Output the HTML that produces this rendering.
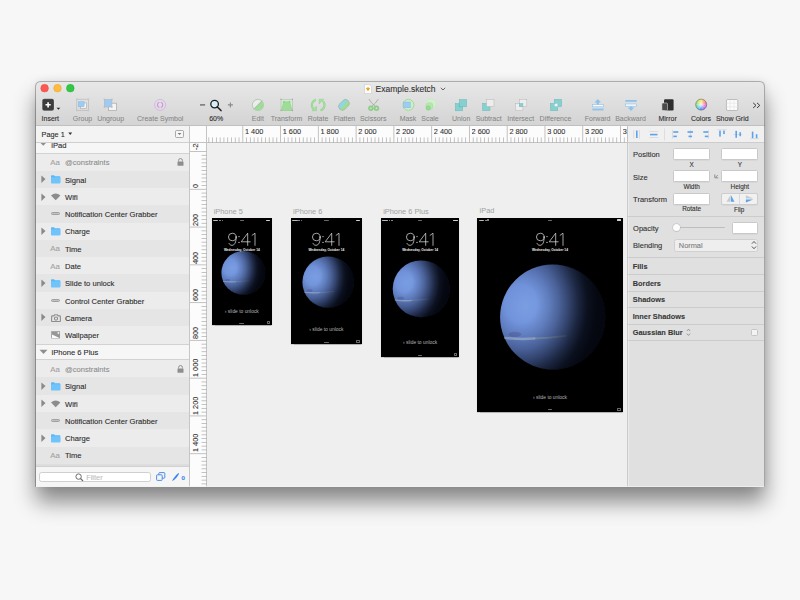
<!DOCTYPE html><html><head><meta charset="utf-8"><style>
html,body{margin:0;padding:0;}
body{width:800px;height:600px;overflow:hidden;background:#f7f7f7;position:relative;font-family:"Liberation Sans", sans-serif;}
.r{position:absolute;}
.t{position:absolute;white-space:nowrap;line-height:normal;-webkit-text-stroke:0.1px currentColor;}
</style></head><body>
<div class="r" style="left:35.50px;top:81.00px;width:729.00px;height:405.80px;border-radius:5px 5px 0 0;box-shadow:0 15px 21px rgba(0,0,0,0.45),0 0 8px rgba(0,0,0,0.08);background:#ddd;"></div>
<div class="r" style="left:35.50px;top:81.00px;width:729.00px;height:44.50px;border-radius:5px 5px 0 0;background:linear-gradient(#e8e8e8,#d4d4d4);border-bottom:0.5px solid #c0c0c0;box-sizing:border-box;"></div>
<svg class="r" style="left:0;top:0" width="100" height="100"><circle cx="44.6" cy="88.2" r="3.85" fill="#fc5753" stroke="#e0443e" stroke-width="0.4"/><circle cx="57.5" cy="88.2" r="3.85" fill="#fdbc40" stroke="#dea236" stroke-width="0.4"/><circle cx="70.3" cy="88.2" r="3.85" fill="#33c748" stroke="#1aab29" stroke-width="0.4"/></svg>
<svg class="r" style="left:363.50px;top:83.50px" width="8" height="10" viewBox="0 0 8 10"><path d="M0.5 0.5 H5.5 L7.5 2.5 V9.5 H0.5 Z" fill="#fff" stroke="#c8c8c8" stroke-width="0.6"/><path d="M2 4.3 L4 3.3 L6 4.3 L4 7.2 Z" fill="#f59c1a"/></svg>
<div class="t" style="left:375.60px;top:83.78px;font-size:8.5px;color:#333;font-weight:normal;">Example.sketch</div>
<svg class="r" style="left:439.50px;top:86.50px" width="6" height="4" viewBox="0 0 6 4"><path d="M0.8 0.8 L3 3 L5.2 0.8" fill="none" stroke="#555" stroke-width="0.9"/></svg>
<div class="t" style="left:-99.70px;width:300px;text-align:center;top:114.76px;font-size:7px;color:#2e2e2e;font-weight:normal;">Insert</div>
<div class="t" style="left:-67.50px;width:300px;text-align:center;top:114.76px;font-size:7px;color:#838383;font-weight:normal;-webkit-text-stroke:0.03px currentColor;">Group</div>
<div class="t" style="left:-39.40px;width:300px;text-align:center;top:114.76px;font-size:7px;color:#838383;font-weight:normal;-webkit-text-stroke:0.03px currentColor;">Ungroup</div>
<div class="t" style="left:10.20px;width:300px;text-align:center;top:114.76px;font-size:7px;color:#838383;font-weight:normal;-webkit-text-stroke:0.03px currentColor;">Create Symbol</div>
<div class="t" style="left:66.20px;width:300px;text-align:center;top:114.76px;font-size:7px;color:#2e2e2e;font-weight:normal;">60%</div>
<div class="t" style="left:107.80px;width:300px;text-align:center;top:114.76px;font-size:7px;color:#838383;font-weight:normal;-webkit-text-stroke:0.03px currentColor;">Edit</div>
<div class="t" style="left:136.50px;width:300px;text-align:center;top:114.76px;font-size:7px;color:#838383;font-weight:normal;-webkit-text-stroke:0.03px currentColor;">Transform</div>
<div class="t" style="left:168.00px;width:300px;text-align:center;top:114.76px;font-size:7px;color:#838383;font-weight:normal;-webkit-text-stroke:0.03px currentColor;">Rotate</div>
<div class="t" style="left:194.50px;width:300px;text-align:center;top:114.76px;font-size:7px;color:#838383;font-weight:normal;-webkit-text-stroke:0.03px currentColor;">Flatten</div>
<div class="t" style="left:223.20px;width:300px;text-align:center;top:114.76px;font-size:7px;color:#838383;font-weight:normal;-webkit-text-stroke:0.03px currentColor;">Scissors</div>
<div class="t" style="left:258.00px;width:300px;text-align:center;top:114.76px;font-size:7px;color:#838383;font-weight:normal;-webkit-text-stroke:0.03px currentColor;">Mask</div>
<div class="t" style="left:280.00px;width:300px;text-align:center;top:114.76px;font-size:7px;color:#838383;font-weight:normal;-webkit-text-stroke:0.03px currentColor;">Scale</div>
<div class="t" style="left:311.20px;width:300px;text-align:center;top:114.76px;font-size:7px;color:#838383;font-weight:normal;-webkit-text-stroke:0.03px currentColor;">Union</div>
<div class="t" style="left:338.70px;width:300px;text-align:center;top:114.76px;font-size:7px;color:#838383;font-weight:normal;-webkit-text-stroke:0.03px currentColor;">Subtract</div>
<div class="t" style="left:370.70px;width:300px;text-align:center;top:114.76px;font-size:7px;color:#838383;font-weight:normal;-webkit-text-stroke:0.03px currentColor;">Intersect</div>
<div class="t" style="left:405.50px;width:300px;text-align:center;top:114.76px;font-size:7px;color:#838383;font-weight:normal;-webkit-text-stroke:0.03px currentColor;">Difference</div>
<div class="t" style="left:447.70px;width:300px;text-align:center;top:114.76px;font-size:7px;color:#838383;font-weight:normal;-webkit-text-stroke:0.03px currentColor;">Forward</div>
<div class="t" style="left:480.50px;width:300px;text-align:center;top:114.76px;font-size:7px;color:#838383;font-weight:normal;-webkit-text-stroke:0.03px currentColor;">Backward</div>
<div class="t" style="left:517.60px;width:300px;text-align:center;top:114.76px;font-size:7px;color:#2e2e2e;font-weight:normal;">Mirror</div>
<div class="t" style="left:551.00px;width:300px;text-align:center;top:114.76px;font-size:7px;color:#2e2e2e;font-weight:normal;">Colors</div>
<div class="t" style="left:582.30px;width:300px;text-align:center;top:114.76px;font-size:7px;color:#2e2e2e;font-weight:normal;">Show Grid</div>
<div class="r" style="left:36.00px;top:125.50px;width:153.50px;height:17.30px;background:#f3f3f3;border-bottom:0.6px solid #cfcfcf;box-sizing:border-box;"></div>
<div class="t" style="left:41.60px;top:129.98px;font-size:7.3px;color:#2b2b2b;font-weight:normal;">Page 1</div>
<svg class="r" style="left:68.30px;top:132.40px" width="5" height="4" viewBox="0 0 5 4"><path d="M0.3 0.5 H4.2 L2.25 3 Z" fill="#333"/></svg>
<svg class="r" style="left:174.50px;top:129.50px" width="9" height="8" viewBox="0 0 9 8"><rect x="0.5" y="0.5" width="8" height="7" rx="1" fill="#f7f7f7" stroke="#8a8a8a" stroke-width="0.7"/><path d="M2.6 3 H6.4 L4.5 5 Z" fill="#777"/></svg>
<div class="r" style="left:36.00px;top:142.80px;width:153.50px;height:11.30px;background:#f6f6f6;border-bottom:0.6px solid #d2d2d2;box-sizing:border-box;"></div>
<div class="r" style="left:36.0px;top:142.8px;width:60px;height:10.4px;overflow:hidden"><svg class="r" style="left:0;top:-0.8px" width="40" height="12"><path d="M3.5 0 H11.0 L7.25 3.8 Z" fill="#8f8f8f"/></svg><div class="t" style="left:15.3px;top:-2.2px;font-size:7.6px;color:#2b2b2b">iPad</div></div>
<div class="r" style="left:36.00px;top:153.50px;width:153.50px;height:17.58px;background:#ececec;"></div>
<div class="t" style="left:50.20px;top:157.86px;font-size:7.8px;color:#a3a3a3;font-weight:normal;">Aa</div>
<div class="t" style="left:65.00px;top:158.35px;font-size:7.6px;color:#8c8c8c;font-weight:normal;">@constraints</div>
<svg class="r" style="left:176.80px;top:158.14px" width="7" height="8" viewBox="0 0 7 8"><path d="M1.6 3.6 V2.6 Q1.6 0.5 3.5 0.5 Q5.4 0.5 5.4 2.6 V3.6" fill="none" stroke="#8e8e8e" stroke-width="1"/><rect x="0.5" y="3.5" width="6" height="4.3" rx="0.6" fill="#8e8e8e"/></svg>
<div class="r" style="left:36.00px;top:170.78px;width:153.50px;height:17.58px;background:#e5e5e5;"></div>
<svg class="r" style="left:41.00px;top:175.22px" width="5" height="9" viewBox="0 0 5 9"><path d="M0.4 0.4 L4.5 4.1 L0.4 7.9 Z" fill="#8a8a8a"/></svg>
<svg class="r" style="left:50.70px;top:175.12px" width="10" height="9" viewBox="0 0 10 9"><path d="M0 1 Q0 0.2 0.8 0.2 H3.0 L3.9 1.2 H8.6 Q9.3 1.2 9.3 1.9 V7.6 Q9.3 8.2 8.7 8.2 H0.6 Q0 8.2 0 7.6 Z" fill="#5ab8f5"/><rect x="0" y="2.3" width="9.3" height="5.9" rx="0.6" fill="#6ec4fb"/></svg>
<div class="t" style="left:65.00px;top:175.63px;font-size:7.6px;color:#2b2b2b;font-weight:normal;">Signal</div>
<div class="r" style="left:36.00px;top:188.06px;width:153.50px;height:17.58px;background:#ececec;"></div>
<svg class="r" style="left:41.00px;top:192.50px" width="5" height="9" viewBox="0 0 5 9"><path d="M0.4 0.4 L4.5 4.1 L0.4 7.9 Z" fill="#8a8a8a"/></svg>
<svg class="r" style="left:50.60px;top:193.10px" width="10" height="8" viewBox="0 0 10 8"><path d="M0 2.4 Q4.7 -1.6 9.4 2.4 L4.7 7.2 Z" fill="#8c8c8c"/></svg>
<div class="t" style="left:65.00px;top:192.91px;font-size:7.6px;color:#2b2b2b;font-weight:normal;">Wifi</div>
<div class="r" style="left:36.00px;top:205.34px;width:153.50px;height:17.58px;background:#e5e5e5;"></div>
<div class="r" style="left:50.80px;top:212.48px;width:9.20px;height:3.00px;border-radius:1.5px;background:#c2c2c2;border:0.6px solid #a0a0a0;box-sizing:border-box;"></div>
<div class="t" style="left:65.00px;top:210.19px;font-size:7.6px;color:#2b2b2b;font-weight:normal;">Notification Center Grabber</div>
<div class="r" style="left:36.00px;top:222.62px;width:153.50px;height:17.58px;background:#ececec;"></div>
<svg class="r" style="left:41.00px;top:227.06px" width="5" height="9" viewBox="0 0 5 9"><path d="M0.4 0.4 L4.5 4.1 L0.4 7.9 Z" fill="#8a8a8a"/></svg>
<svg class="r" style="left:50.70px;top:226.96px" width="10" height="9" viewBox="0 0 10 9"><path d="M0 1 Q0 0.2 0.8 0.2 H3.0 L3.9 1.2 H8.6 Q9.3 1.2 9.3 1.9 V7.6 Q9.3 8.2 8.7 8.2 H0.6 Q0 8.2 0 7.6 Z" fill="#5ab8f5"/><rect x="0" y="2.3" width="9.3" height="5.9" rx="0.6" fill="#6ec4fb"/></svg>
<div class="t" style="left:65.00px;top:227.47px;font-size:7.6px;color:#2b2b2b;font-weight:normal;">Charge</div>
<div class="r" style="left:36.00px;top:239.90px;width:153.50px;height:17.58px;background:#e5e5e5;"></div>
<div class="t" style="left:50.20px;top:244.26px;font-size:7.8px;color:#a3a3a3;font-weight:normal;">Aa</div>
<div class="t" style="left:65.00px;top:244.75px;font-size:7.6px;color:#2b2b2b;font-weight:normal;">Time</div>
<div class="r" style="left:36.00px;top:257.18px;width:153.50px;height:17.58px;background:#ececec;"></div>
<div class="t" style="left:50.20px;top:261.54px;font-size:7.8px;color:#a3a3a3;font-weight:normal;">Aa</div>
<div class="t" style="left:65.00px;top:262.03px;font-size:7.6px;color:#2b2b2b;font-weight:normal;">Date</div>
<div class="r" style="left:36.00px;top:274.46px;width:153.50px;height:17.58px;background:#e5e5e5;"></div>
<svg class="r" style="left:41.00px;top:278.90px" width="5" height="9" viewBox="0 0 5 9"><path d="M0.4 0.4 L4.5 4.1 L0.4 7.9 Z" fill="#8a8a8a"/></svg>
<svg class="r" style="left:50.70px;top:278.80px" width="10" height="9" viewBox="0 0 10 9"><path d="M0 1 Q0 0.2 0.8 0.2 H3.0 L3.9 1.2 H8.6 Q9.3 1.2 9.3 1.9 V7.6 Q9.3 8.2 8.7 8.2 H0.6 Q0 8.2 0 7.6 Z" fill="#5ab8f5"/><rect x="0" y="2.3" width="9.3" height="5.9" rx="0.6" fill="#6ec4fb"/></svg>
<div class="t" style="left:65.00px;top:279.31px;font-size:7.6px;color:#2b2b2b;font-weight:normal;">Slide to unlock</div>
<div class="r" style="left:36.00px;top:291.74px;width:153.50px;height:17.58px;background:#ececec;"></div>
<div class="r" style="left:50.80px;top:298.88px;width:9.20px;height:3.00px;border-radius:1.5px;background:#c2c2c2;border:0.6px solid #a0a0a0;box-sizing:border-box;"></div>
<div class="t" style="left:65.00px;top:296.59px;font-size:7.6px;color:#2b2b2b;font-weight:normal;">Control Center Grabber</div>
<div class="r" style="left:36.00px;top:309.02px;width:153.50px;height:17.58px;background:#e5e5e5;"></div>
<svg class="r" style="left:41.00px;top:313.46px" width="5" height="9" viewBox="0 0 5 9"><path d="M0.4 0.4 L4.5 4.1 L0.4 7.9 Z" fill="#8a8a8a"/></svg>
<svg class="r" style="left:50.50px;top:313.66px" width="10" height="8" viewBox="0 0 10 8"><path d="M1.2 1.9 H2.9 L3.7 0.7 H6.3 L7.1 1.9 H8.8 Q9.4 1.9 9.4 2.5 V6.9 Q9.4 7.5 8.8 7.5 H1.2 Q0.6 7.5 0.6 6.9 V2.5 Q0.6 1.9 1.2 1.9 Z" fill="none" stroke="#8e8e8e" stroke-width="1.1"/><circle cx="5" cy="4.6" r="1.6" fill="none" stroke="#8e8e8e" stroke-width="1.1"/></svg>
<div class="t" style="left:65.00px;top:313.87px;font-size:7.6px;color:#2b2b2b;font-weight:normal;">Camera</div>
<div class="r" style="left:36.00px;top:326.30px;width:153.50px;height:17.58px;background:#ececec;"></div>
<svg class="r" style="left:50.80px;top:331.24px" width="9.4" height="7.6" viewBox="0 0 9.4 7.6"><rect x="0.2" y="0.2" width="8.9" height="7.2" fill="#979797"/><path d="M1.0 3.6 L8.4 6.9 H1.0 Z" fill="#fdfdfd"/><rect x="6.6" y="1.2" width="1.6" height="1.6" fill="#fdfdfd"/></svg>
<div class="t" style="left:65.00px;top:331.15px;font-size:7.6px;color:#2b2b2b;font-weight:normal;">Wallpaper</div>
<div class="r" style="left:36.00px;top:343.58px;width:153.50px;height:16.60px;background:#f6f6f6;border-top:0.6px solid #d2d2d2;border-bottom:0.6px solid #d2d2d2;box-sizing:border-box;"></div>
<svg class="r" style="left:38.80px;top:348.88px" width="9" height="6" viewBox="0 0 9 6"><path d="M0.5 0.8 H8.5 L4.5 5 Z" fill="#8f8f8f"/></svg>
<div class="t" style="left:51.50px;top:347.99px;font-size:7.6px;color:#2b2b2b;font-weight:normal;">iPhone 6 Plus</div>
<div class="r" style="left:36.00px;top:360.18px;width:153.50px;height:17.58px;background:#ececec;"></div>
<div class="t" style="left:50.20px;top:364.54px;font-size:7.8px;color:#a3a3a3;font-weight:normal;">Aa</div>
<div class="t" style="left:65.00px;top:365.03px;font-size:7.6px;color:#8c8c8c;font-weight:normal;">@constraints</div>
<svg class="r" style="left:176.80px;top:364.82px" width="7" height="8" viewBox="0 0 7 8"><path d="M1.6 3.6 V2.6 Q1.6 0.5 3.5 0.5 Q5.4 0.5 5.4 2.6 V3.6" fill="none" stroke="#8e8e8e" stroke-width="1"/><rect x="0.5" y="3.5" width="6" height="4.3" rx="0.6" fill="#8e8e8e"/></svg>
<div class="r" style="left:36.00px;top:377.46px;width:153.50px;height:17.58px;background:#e5e5e5;"></div>
<svg class="r" style="left:41.00px;top:381.90px" width="5" height="9" viewBox="0 0 5 9"><path d="M0.4 0.4 L4.5 4.1 L0.4 7.9 Z" fill="#8a8a8a"/></svg>
<svg class="r" style="left:50.70px;top:381.80px" width="10" height="9" viewBox="0 0 10 9"><path d="M0 1 Q0 0.2 0.8 0.2 H3.0 L3.9 1.2 H8.6 Q9.3 1.2 9.3 1.9 V7.6 Q9.3 8.2 8.7 8.2 H0.6 Q0 8.2 0 7.6 Z" fill="#5ab8f5"/><rect x="0" y="2.3" width="9.3" height="5.9" rx="0.6" fill="#6ec4fb"/></svg>
<div class="t" style="left:65.00px;top:382.31px;font-size:7.6px;color:#2b2b2b;font-weight:normal;">Signal</div>
<div class="r" style="left:36.00px;top:394.74px;width:153.50px;height:17.58px;background:#ececec;"></div>
<svg class="r" style="left:41.00px;top:399.18px" width="5" height="9" viewBox="0 0 5 9"><path d="M0.4 0.4 L4.5 4.1 L0.4 7.9 Z" fill="#8a8a8a"/></svg>
<svg class="r" style="left:50.60px;top:399.78px" width="10" height="8" viewBox="0 0 10 8"><path d="M0 2.4 Q4.7 -1.6 9.4 2.4 L4.7 7.2 Z" fill="#8c8c8c"/></svg>
<div class="t" style="left:65.00px;top:399.59px;font-size:7.6px;color:#2b2b2b;font-weight:normal;">Wifi</div>
<div class="r" style="left:36.00px;top:412.02px;width:153.50px;height:17.58px;background:#e5e5e5;"></div>
<div class="r" style="left:50.80px;top:419.16px;width:9.20px;height:3.00px;border-radius:1.5px;background:#c2c2c2;border:0.6px solid #a0a0a0;box-sizing:border-box;"></div>
<div class="t" style="left:65.00px;top:416.87px;font-size:7.6px;color:#2b2b2b;font-weight:normal;">Notification Center Grabber</div>
<div class="r" style="left:36.00px;top:429.30px;width:153.50px;height:17.58px;background:#ececec;"></div>
<svg class="r" style="left:41.00px;top:433.74px" width="5" height="9" viewBox="0 0 5 9"><path d="M0.4 0.4 L4.5 4.1 L0.4 7.9 Z" fill="#8a8a8a"/></svg>
<svg class="r" style="left:50.70px;top:433.64px" width="10" height="9" viewBox="0 0 10 9"><path d="M0 1 Q0 0.2 0.8 0.2 H3.0 L3.9 1.2 H8.6 Q9.3 1.2 9.3 1.9 V7.6 Q9.3 8.2 8.7 8.2 H0.6 Q0 8.2 0 7.6 Z" fill="#5ab8f5"/><rect x="0" y="2.3" width="9.3" height="5.9" rx="0.6" fill="#6ec4fb"/></svg>
<div class="t" style="left:65.00px;top:434.15px;font-size:7.6px;color:#2b2b2b;font-weight:normal;">Charge</div>
<div class="r" style="left:36.00px;top:446.58px;width:153.50px;height:17.58px;background:#e5e5e5;"></div>
<div class="t" style="left:50.20px;top:450.94px;font-size:7.8px;color:#a3a3a3;font-weight:normal;">Aa</div>
<div class="t" style="left:65.00px;top:451.43px;font-size:7.6px;color:#2b2b2b;font-weight:normal;">Time</div>
<div class="r" style="left:36.00px;top:465.60px;width:153.50px;height:21.20px;background:#f5f5f5;border-top:0.6px solid #d0d0d0;box-sizing:border-box;"></div>
<div class="r" style="left:39.00px;top:471.60px;width:111.60px;height:10.80px;background:#fff;border:0.6px solid #cfcfcf;border-radius:2.5px;box-sizing:border-box;"></div>
<svg class="r" style="left:75.20px;top:472.80px" width="9" height="9" viewBox="0 0 9 9"><circle cx="3.6" cy="3.6" r="2.7" fill="none" stroke="#6a6a6a" stroke-width="1"/><path d="M5.5 5.5 L8.0 8.0" stroke="#6a6a6a" stroke-width="1.1"/></svg>
<div class="t" style="left:86.20px;top:472.99px;font-size:7.4px;color:#bdbdbd;font-weight:normal;">Filter</div>
<svg class="r" style="left:156.00px;top:472.00px" width="10" height="9" viewBox="0 0 10 9"><rect x="0.6" y="2.8" width="5.6" height="5.6" rx="0.8" fill="none" stroke="#3c82e6" stroke-width="0.9"/><path d="M2.8 2.8 V1.4 Q2.8 0.6 3.6 0.6 H8 Q8.8 0.6 8.8 1.4 V5.4 Q8.8 6.2 8 6.2 H6.2" fill="none" stroke="#3c82e6" stroke-width="0.9"/></svg>
<svg class="r" style="left:171.00px;top:471.50px" width="9" height="10" viewBox="0 0 9 10"><path d="M7.6 1.0 Q8.2 1.2 7.9 2.0 Q6.2 5.6 3.4 7.8 Q2.0 8.9 1.0 9.0 Q1.6 7.4 3.4 5.2 Q5.4 2.6 7.6 1.0 Z" fill="#3a86ee"/></svg>
<div class="t" style="left:181.40px;top:473.90px;font-size:6.2px;color:#3a86ee;font-weight:bold;">0</div>
<div class="r" style="left:189.20px;top:125.50px;width:0.70px;height:361.30px;background:#c6c6c6;"></div>
<div class="r" style="left:189.90px;top:125.50px;width:437.30px;height:361.30px;background:#efefef;"></div>
<div class="r" style="left:189.90px;top:125.50px;width:437.30px;height:17.40px;background:#fcfcfc;border-bottom:0.6px solid #c4c4c4;box-sizing:border-box;"></div>
<div class="r" style="left:189.90px;top:142.90px;width:17.10px;height:343.90px;background:#fcfcfc;border-right:0.6px solid #c4c4c4;box-sizing:border-box;"></div>
<div class="r" style="left:206.40px;top:125.50px;width:0.60px;height:17.40px;background:#c4c4c4;"></div>
<svg class="r" style="left:0;top:125.5px;overflow:hidden" width="627" height="17.40"><clipPath id="hc"><rect x="207.0" y="0" width="420.20000000000005" height="20"/></clipPath><g clip-path="url(#hc)"><rect x="208.41" y="11.40" width="0.8" height="6.00" fill="#b4b4b4"/><rect x="212.18" y="11.40" width="0.8" height="6.00" fill="#b4b4b4"/><rect x="215.96" y="11.40" width="0.8" height="6.00" fill="#b4b4b4"/><rect x="219.74" y="11.40" width="0.8" height="6.00" fill="#b4b4b4"/><rect x="223.52" y="11.40" width="0.8" height="6.00" fill="#b4b4b4"/><rect x="227.29" y="11.40" width="0.8" height="6.00" fill="#b4b4b4"/><rect x="231.07" y="11.40" width="0.8" height="6.00" fill="#b4b4b4"/><rect x="234.85" y="11.40" width="0.8" height="6.00" fill="#b4b4b4"/><rect x="238.62" y="11.40" width="0.8" height="6.00" fill="#b4b4b4"/><rect x="242.35" y="0" width="0.9" height="17.40" fill="#bcbcbc"/><rect x="246.18" y="11.40" width="0.8" height="6.00" fill="#b4b4b4"/><rect x="249.95" y="11.40" width="0.8" height="6.00" fill="#b4b4b4"/><rect x="253.73" y="11.40" width="0.8" height="6.00" fill="#b4b4b4"/><rect x="257.51" y="11.40" width="0.8" height="6.00" fill="#b4b4b4"/><rect x="261.29" y="11.40" width="0.8" height="6.00" fill="#b4b4b4"/><rect x="265.06" y="11.40" width="0.8" height="6.00" fill="#b4b4b4"/><rect x="268.84" y="11.40" width="0.8" height="6.00" fill="#b4b4b4"/><rect x="272.62" y="11.40" width="0.8" height="6.00" fill="#b4b4b4"/><rect x="276.39" y="11.40" width="0.8" height="6.00" fill="#b4b4b4"/><rect x="280.12" y="0" width="0.9" height="17.40" fill="#bcbcbc"/><rect x="283.95" y="11.40" width="0.8" height="6.00" fill="#b4b4b4"/><rect x="287.72" y="11.40" width="0.8" height="6.00" fill="#b4b4b4"/><rect x="291.50" y="11.40" width="0.8" height="6.00" fill="#b4b4b4"/><rect x="295.28" y="11.40" width="0.8" height="6.00" fill="#b4b4b4"/><rect x="299.06" y="11.40" width="0.8" height="6.00" fill="#b4b4b4"/><rect x="302.83" y="11.40" width="0.8" height="6.00" fill="#b4b4b4"/><rect x="306.61" y="11.40" width="0.8" height="6.00" fill="#b4b4b4"/><rect x="310.39" y="11.40" width="0.8" height="6.00" fill="#b4b4b4"/><rect x="314.16" y="11.40" width="0.8" height="6.00" fill="#b4b4b4"/><rect x="317.89" y="0" width="0.9" height="17.40" fill="#bcbcbc"/><rect x="321.72" y="11.40" width="0.8" height="6.00" fill="#b4b4b4"/><rect x="325.49" y="11.40" width="0.8" height="6.00" fill="#b4b4b4"/><rect x="329.27" y="11.40" width="0.8" height="6.00" fill="#b4b4b4"/><rect x="333.05" y="11.40" width="0.8" height="6.00" fill="#b4b4b4"/><rect x="336.83" y="11.40" width="0.8" height="6.00" fill="#b4b4b4"/><rect x="340.60" y="11.40" width="0.8" height="6.00" fill="#b4b4b4"/><rect x="344.38" y="11.40" width="0.8" height="6.00" fill="#b4b4b4"/><rect x="348.16" y="11.40" width="0.8" height="6.00" fill="#b4b4b4"/><rect x="351.93" y="11.40" width="0.8" height="6.00" fill="#b4b4b4"/><rect x="355.66" y="0" width="0.9" height="17.40" fill="#bcbcbc"/><rect x="359.49" y="11.40" width="0.8" height="6.00" fill="#b4b4b4"/><rect x="363.26" y="11.40" width="0.8" height="6.00" fill="#b4b4b4"/><rect x="367.04" y="11.40" width="0.8" height="6.00" fill="#b4b4b4"/><rect x="370.82" y="11.40" width="0.8" height="6.00" fill="#b4b4b4"/><rect x="374.60" y="11.40" width="0.8" height="6.00" fill="#b4b4b4"/><rect x="378.37" y="11.40" width="0.8" height="6.00" fill="#b4b4b4"/><rect x="382.15" y="11.40" width="0.8" height="6.00" fill="#b4b4b4"/><rect x="385.93" y="11.40" width="0.8" height="6.00" fill="#b4b4b4"/><rect x="389.70" y="11.40" width="0.8" height="6.00" fill="#b4b4b4"/><rect x="393.43" y="0" width="0.9" height="17.40" fill="#bcbcbc"/><rect x="397.26" y="11.40" width="0.8" height="6.00" fill="#b4b4b4"/><rect x="401.03" y="11.40" width="0.8" height="6.00" fill="#b4b4b4"/><rect x="404.81" y="11.40" width="0.8" height="6.00" fill="#b4b4b4"/><rect x="408.59" y="11.40" width="0.8" height="6.00" fill="#b4b4b4"/><rect x="412.37" y="11.40" width="0.8" height="6.00" fill="#b4b4b4"/><rect x="416.14" y="11.40" width="0.8" height="6.00" fill="#b4b4b4"/><rect x="419.92" y="11.40" width="0.8" height="6.00" fill="#b4b4b4"/><rect x="423.70" y="11.40" width="0.8" height="6.00" fill="#b4b4b4"/><rect x="427.47" y="11.40" width="0.8" height="6.00" fill="#b4b4b4"/><rect x="431.20" y="0" width="0.9" height="17.40" fill="#bcbcbc"/><rect x="435.03" y="11.40" width="0.8" height="6.00" fill="#b4b4b4"/><rect x="438.80" y="11.40" width="0.8" height="6.00" fill="#b4b4b4"/><rect x="442.58" y="11.40" width="0.8" height="6.00" fill="#b4b4b4"/><rect x="446.36" y="11.40" width="0.8" height="6.00" fill="#b4b4b4"/><rect x="450.14" y="11.40" width="0.8" height="6.00" fill="#b4b4b4"/><rect x="453.91" y="11.40" width="0.8" height="6.00" fill="#b4b4b4"/><rect x="457.69" y="11.40" width="0.8" height="6.00" fill="#b4b4b4"/><rect x="461.47" y="11.40" width="0.8" height="6.00" fill="#b4b4b4"/><rect x="465.24" y="11.40" width="0.8" height="6.00" fill="#b4b4b4"/><rect x="468.97" y="0" width="0.9" height="17.40" fill="#bcbcbc"/><rect x="472.80" y="11.40" width="0.8" height="6.00" fill="#b4b4b4"/><rect x="476.57" y="11.40" width="0.8" height="6.00" fill="#b4b4b4"/><rect x="480.35" y="11.40" width="0.8" height="6.00" fill="#b4b4b4"/><rect x="484.13" y="11.40" width="0.8" height="6.00" fill="#b4b4b4"/><rect x="487.91" y="11.40" width="0.8" height="6.00" fill="#b4b4b4"/><rect x="491.68" y="11.40" width="0.8" height="6.00" fill="#b4b4b4"/><rect x="495.46" y="11.40" width="0.8" height="6.00" fill="#b4b4b4"/><rect x="499.24" y="11.40" width="0.8" height="6.00" fill="#b4b4b4"/><rect x="503.01" y="11.40" width="0.8" height="6.00" fill="#b4b4b4"/><rect x="506.74" y="0" width="0.9" height="17.40" fill="#bcbcbc"/><rect x="510.57" y="11.40" width="0.8" height="6.00" fill="#b4b4b4"/><rect x="514.34" y="11.40" width="0.8" height="6.00" fill="#b4b4b4"/><rect x="518.12" y="11.40" width="0.8" height="6.00" fill="#b4b4b4"/><rect x="521.90" y="11.40" width="0.8" height="6.00" fill="#b4b4b4"/><rect x="525.68" y="11.40" width="0.8" height="6.00" fill="#b4b4b4"/><rect x="529.45" y="11.40" width="0.8" height="6.00" fill="#b4b4b4"/><rect x="533.23" y="11.40" width="0.8" height="6.00" fill="#b4b4b4"/><rect x="537.01" y="11.40" width="0.8" height="6.00" fill="#b4b4b4"/><rect x="540.78" y="11.40" width="0.8" height="6.00" fill="#b4b4b4"/><rect x="544.51" y="0" width="0.9" height="17.40" fill="#bcbcbc"/><rect x="548.34" y="11.40" width="0.8" height="6.00" fill="#b4b4b4"/><rect x="552.11" y="11.40" width="0.8" height="6.00" fill="#b4b4b4"/><rect x="555.89" y="11.40" width="0.8" height="6.00" fill="#b4b4b4"/><rect x="559.67" y="11.40" width="0.8" height="6.00" fill="#b4b4b4"/><rect x="563.45" y="11.40" width="0.8" height="6.00" fill="#b4b4b4"/><rect x="567.22" y="11.40" width="0.8" height="6.00" fill="#b4b4b4"/><rect x="571.00" y="11.40" width="0.8" height="6.00" fill="#b4b4b4"/><rect x="574.78" y="11.40" width="0.8" height="6.00" fill="#b4b4b4"/><rect x="578.55" y="11.40" width="0.8" height="6.00" fill="#b4b4b4"/><rect x="582.28" y="0" width="0.9" height="17.40" fill="#bcbcbc"/><rect x="586.11" y="11.40" width="0.8" height="6.00" fill="#b4b4b4"/><rect x="589.88" y="11.40" width="0.8" height="6.00" fill="#b4b4b4"/><rect x="593.66" y="11.40" width="0.8" height="6.00" fill="#b4b4b4"/><rect x="597.44" y="11.40" width="0.8" height="6.00" fill="#b4b4b4"/><rect x="601.22" y="11.40" width="0.8" height="6.00" fill="#b4b4b4"/><rect x="604.99" y="11.40" width="0.8" height="6.00" fill="#b4b4b4"/><rect x="608.77" y="11.40" width="0.8" height="6.00" fill="#b4b4b4"/><rect x="612.55" y="11.40" width="0.8" height="6.00" fill="#b4b4b4"/><rect x="616.32" y="11.40" width="0.8" height="6.00" fill="#b4b4b4"/><rect x="620.05" y="0" width="0.9" height="17.40" fill="#bcbcbc"/><rect x="623.88" y="11.40" width="0.8" height="6.00" fill="#b4b4b4"/></g></svg>
<div class="r" style="left:245.00px;top:126px;width:40.00px;height:12px;overflow:hidden"><div class="t" style="left:0;top:1.48px;font-size:7.3px;color:#333">1 400</div></div>
<div class="r" style="left:282.77px;top:126px;width:40.00px;height:12px;overflow:hidden"><div class="t" style="left:0;top:1.48px;font-size:7.3px;color:#333">1 600</div></div>
<div class="r" style="left:320.54px;top:126px;width:40.00px;height:12px;overflow:hidden"><div class="t" style="left:0;top:1.48px;font-size:7.3px;color:#333">1 800</div></div>
<div class="r" style="left:358.31px;top:126px;width:40.00px;height:12px;overflow:hidden"><div class="t" style="left:0;top:1.48px;font-size:7.3px;color:#333">2 000</div></div>
<div class="r" style="left:396.08px;top:126px;width:40.00px;height:12px;overflow:hidden"><div class="t" style="left:0;top:1.48px;font-size:7.3px;color:#333">2 200</div></div>
<div class="r" style="left:433.85px;top:126px;width:40.00px;height:12px;overflow:hidden"><div class="t" style="left:0;top:1.48px;font-size:7.3px;color:#333">2 400</div></div>
<div class="r" style="left:471.62px;top:126px;width:40.00px;height:12px;overflow:hidden"><div class="t" style="left:0;top:1.48px;font-size:7.3px;color:#333">2 600</div></div>
<div class="r" style="left:509.39px;top:126px;width:40.00px;height:12px;overflow:hidden"><div class="t" style="left:0;top:1.48px;font-size:7.3px;color:#333">2 800</div></div>
<div class="r" style="left:547.16px;top:126px;width:40.00px;height:12px;overflow:hidden"><div class="t" style="left:0;top:1.48px;font-size:7.3px;color:#333">3 000</div></div>
<div class="r" style="left:584.93px;top:126px;width:40.00px;height:12px;overflow:hidden"><div class="t" style="left:0;top:1.48px;font-size:7.3px;color:#333">3 200</div></div>
<div class="r" style="left:622.70px;top:126px;width:4.50px;height:12px;overflow:hidden"><div class="t" style="left:0;top:1.48px;font-size:7.3px;color:#333">3 400</div></div>
<svg class="r" style="left:189.5px;top:142.9px" width="17.50" height="343.90"><rect x="0" y="8.08" width="17.50" height="0.9" fill="#bcbcbc"/><rect x="11.50" y="11.91" width="6.00" height="0.8" fill="#b4b4b4"/><rect x="11.50" y="15.68" width="6.00" height="0.8" fill="#b4b4b4"/><rect x="11.50" y="19.46" width="6.00" height="0.8" fill="#b4b4b4"/><rect x="11.50" y="23.24" width="6.00" height="0.8" fill="#b4b4b4"/><rect x="11.50" y="27.01" width="6.00" height="0.8" fill="#b4b4b4"/><rect x="11.50" y="30.79" width="6.00" height="0.8" fill="#b4b4b4"/><rect x="11.50" y="34.57" width="6.00" height="0.8" fill="#b4b4b4"/><rect x="11.50" y="38.35" width="6.00" height="0.8" fill="#b4b4b4"/><rect x="11.50" y="42.12" width="6.00" height="0.8" fill="#b4b4b4"/><rect x="0" y="45.85" width="17.50" height="0.9" fill="#bcbcbc"/><rect x="11.50" y="49.68" width="6.00" height="0.8" fill="#b4b4b4"/><rect x="11.50" y="53.45" width="6.00" height="0.8" fill="#b4b4b4"/><rect x="11.50" y="57.23" width="6.00" height="0.8" fill="#b4b4b4"/><rect x="11.50" y="61.01" width="6.00" height="0.8" fill="#b4b4b4"/><rect x="11.50" y="64.78" width="6.00" height="0.8" fill="#b4b4b4"/><rect x="11.50" y="68.56" width="6.00" height="0.8" fill="#b4b4b4"/><rect x="11.50" y="72.34" width="6.00" height="0.8" fill="#b4b4b4"/><rect x="11.50" y="76.12" width="6.00" height="0.8" fill="#b4b4b4"/><rect x="11.50" y="79.89" width="6.00" height="0.8" fill="#b4b4b4"/><rect x="0" y="83.62" width="17.50" height="0.9" fill="#bcbcbc"/><rect x="11.50" y="87.45" width="6.00" height="0.8" fill="#b4b4b4"/><rect x="11.50" y="91.22" width="6.00" height="0.8" fill="#b4b4b4"/><rect x="11.50" y="95.00" width="6.00" height="0.8" fill="#b4b4b4"/><rect x="11.50" y="98.78" width="6.00" height="0.8" fill="#b4b4b4"/><rect x="11.50" y="102.55" width="6.00" height="0.8" fill="#b4b4b4"/><rect x="11.50" y="106.33" width="6.00" height="0.8" fill="#b4b4b4"/><rect x="11.50" y="110.11" width="6.00" height="0.8" fill="#b4b4b4"/><rect x="11.50" y="113.89" width="6.00" height="0.8" fill="#b4b4b4"/><rect x="11.50" y="117.66" width="6.00" height="0.8" fill="#b4b4b4"/><rect x="0" y="121.39" width="17.50" height="0.9" fill="#bcbcbc"/><rect x="11.50" y="125.22" width="6.00" height="0.8" fill="#b4b4b4"/><rect x="11.50" y="128.99" width="6.00" height="0.8" fill="#b4b4b4"/><rect x="11.50" y="132.77" width="6.00" height="0.8" fill="#b4b4b4"/><rect x="11.50" y="136.55" width="6.00" height="0.8" fill="#b4b4b4"/><rect x="11.50" y="140.32" width="6.00" height="0.8" fill="#b4b4b4"/><rect x="11.50" y="144.10" width="6.00" height="0.8" fill="#b4b4b4"/><rect x="11.50" y="147.88" width="6.00" height="0.8" fill="#b4b4b4"/><rect x="11.50" y="151.66" width="6.00" height="0.8" fill="#b4b4b4"/><rect x="11.50" y="155.43" width="6.00" height="0.8" fill="#b4b4b4"/><rect x="0" y="159.16" width="17.50" height="0.9" fill="#bcbcbc"/><rect x="11.50" y="162.99" width="6.00" height="0.8" fill="#b4b4b4"/><rect x="11.50" y="166.76" width="6.00" height="0.8" fill="#b4b4b4"/><rect x="11.50" y="170.54" width="6.00" height="0.8" fill="#b4b4b4"/><rect x="11.50" y="174.32" width="6.00" height="0.8" fill="#b4b4b4"/><rect x="11.50" y="178.09" width="6.00" height="0.8" fill="#b4b4b4"/><rect x="11.50" y="181.87" width="6.00" height="0.8" fill="#b4b4b4"/><rect x="11.50" y="185.65" width="6.00" height="0.8" fill="#b4b4b4"/><rect x="11.50" y="189.43" width="6.00" height="0.8" fill="#b4b4b4"/><rect x="11.50" y="193.20" width="6.00" height="0.8" fill="#b4b4b4"/><rect x="0" y="196.93" width="17.50" height="0.9" fill="#bcbcbc"/><rect x="11.50" y="200.76" width="6.00" height="0.8" fill="#b4b4b4"/><rect x="11.50" y="204.53" width="6.00" height="0.8" fill="#b4b4b4"/><rect x="11.50" y="208.31" width="6.00" height="0.8" fill="#b4b4b4"/><rect x="11.50" y="212.09" width="6.00" height="0.8" fill="#b4b4b4"/><rect x="11.50" y="215.86" width="6.00" height="0.8" fill="#b4b4b4"/><rect x="11.50" y="219.64" width="6.00" height="0.8" fill="#b4b4b4"/><rect x="11.50" y="223.42" width="6.00" height="0.8" fill="#b4b4b4"/><rect x="11.50" y="227.20" width="6.00" height="0.8" fill="#b4b4b4"/><rect x="11.50" y="230.97" width="6.00" height="0.8" fill="#b4b4b4"/><rect x="0" y="234.70" width="17.50" height="0.9" fill="#bcbcbc"/><rect x="11.50" y="238.53" width="6.00" height="0.8" fill="#b4b4b4"/><rect x="11.50" y="242.30" width="6.00" height="0.8" fill="#b4b4b4"/><rect x="11.50" y="246.08" width="6.00" height="0.8" fill="#b4b4b4"/><rect x="11.50" y="249.86" width="6.00" height="0.8" fill="#b4b4b4"/><rect x="11.50" y="253.63" width="6.00" height="0.8" fill="#b4b4b4"/><rect x="11.50" y="257.41" width="6.00" height="0.8" fill="#b4b4b4"/><rect x="11.50" y="261.19" width="6.00" height="0.8" fill="#b4b4b4"/><rect x="11.50" y="264.97" width="6.00" height="0.8" fill="#b4b4b4"/><rect x="11.50" y="268.74" width="6.00" height="0.8" fill="#b4b4b4"/><rect x="0" y="272.47" width="17.50" height="0.9" fill="#bcbcbc"/><rect x="11.50" y="276.30" width="6.00" height="0.8" fill="#b4b4b4"/><rect x="11.50" y="280.07" width="6.00" height="0.8" fill="#b4b4b4"/><rect x="11.50" y="283.85" width="6.00" height="0.8" fill="#b4b4b4"/><rect x="11.50" y="287.63" width="6.00" height="0.8" fill="#b4b4b4"/><rect x="11.50" y="291.40" width="6.00" height="0.8" fill="#b4b4b4"/><rect x="11.50" y="295.18" width="6.00" height="0.8" fill="#b4b4b4"/><rect x="11.50" y="298.96" width="6.00" height="0.8" fill="#b4b4b4"/><rect x="11.50" y="302.74" width="6.00" height="0.8" fill="#b4b4b4"/><rect x="11.50" y="306.51" width="6.00" height="0.8" fill="#b4b4b4"/><rect x="0" y="310.24" width="17.50" height="0.9" fill="#bcbcbc"/><rect x="11.50" y="314.07" width="6.00" height="0.8" fill="#b4b4b4"/><rect x="11.50" y="317.84" width="6.00" height="0.8" fill="#b4b4b4"/><rect x="11.50" y="321.62" width="6.00" height="0.8" fill="#b4b4b4"/><rect x="11.50" y="325.40" width="6.00" height="0.8" fill="#b4b4b4"/><rect x="11.50" y="329.17" width="6.00" height="0.8" fill="#b4b4b4"/><rect x="11.50" y="332.95" width="6.00" height="0.8" fill="#b4b4b4"/><rect x="11.50" y="336.73" width="6.00" height="0.8" fill="#b4b4b4"/><rect x="11.50" y="340.51" width="6.00" height="0.8" fill="#b4b4b4"/></svg>
<div class="r" style="left:189.5px;top:142.9px;width:17.50px;height:343.90px;overflow:hidden">
<div class="t" style="left:1.50px;top:7.43px;font-size:7.3px;color:#333;transform-origin:0 0;transform:rotate(-90deg);line-height:normal">-200</div>
<div class="t" style="left:1.50px;top:45.20px;font-size:7.3px;color:#333;transform-origin:0 0;transform:rotate(-90deg);line-height:normal">0</div>
<div class="t" style="left:1.50px;top:82.97px;font-size:7.3px;color:#333;transform-origin:0 0;transform:rotate(-90deg);line-height:normal">200</div>
<div class="t" style="left:1.50px;top:120.74px;font-size:7.3px;color:#333;transform-origin:0 0;transform:rotate(-90deg);line-height:normal">400</div>
<div class="t" style="left:1.50px;top:158.51px;font-size:7.3px;color:#333;transform-origin:0 0;transform:rotate(-90deg);line-height:normal">600</div>
<div class="t" style="left:1.50px;top:196.28px;font-size:7.3px;color:#333;transform-origin:0 0;transform:rotate(-90deg);line-height:normal">800</div>
<div class="t" style="left:1.50px;top:234.05px;font-size:7.3px;color:#333;transform-origin:0 0;transform:rotate(-90deg);line-height:normal">1 000</div>
<div class="t" style="left:1.50px;top:271.82px;font-size:7.3px;color:#333;transform-origin:0 0;transform:rotate(-90deg);line-height:normal">1 200</div>
<div class="t" style="left:1.50px;top:309.59px;font-size:7.3px;color:#333;transform-origin:0 0;transform:rotate(-90deg);line-height:normal">1 400</div>
</div>
<div class="t" style="left:213.70px;top:206.59px;font-size:7.4px;color:#a0a0a0;font-weight:normal;-webkit-text-stroke:0;">iPhone 5</div>
<div class="r" style="left:211.50px;top:218.00px;width:60.60px;height:107.30px;background:#000;overflow:hidden;box-shadow:0 0.5px 1px rgba(0,0,0,0.25)">
<svg class="r" style="left:0;top:0" width="60.60" height="107.30"><defs><radialGradient id="pb1" gradientUnits="userSpaceOnUse" cx="20.30" cy="50.44" r="32.70"><stop offset="0" stop-color="#7a9ee2"/><stop offset="0.5" stop-color="#6888d4"/><stop offset="1" stop-color="#5070be"/></radialGradient><radialGradient id="ps1" gradientUnits="userSpaceOnUse" cx="0" cy="0" r="1.3" gradientTransform="translate(18.12 49.35) scale(26.16 31.61)"><stop offset="0.000" stop-color="#03050c" stop-opacity="0"/><stop offset="0.192" stop-color="#03050c" stop-opacity="0"/><stop offset="0.346" stop-color="#03050c" stop-opacity="0.15"/><stop offset="0.462" stop-color="#03050c" stop-opacity="0.3"/><stop offset="0.577" stop-color="#03050c" stop-opacity="0.5"/><stop offset="0.692" stop-color="#03050c" stop-opacity="0.72"/><stop offset="0.808" stop-color="#03050c" stop-opacity="0.9"/><stop offset="0.923" stop-color="#03050c" stop-opacity="0.97"/><stop offset="1.000" stop-color="#03050c" stop-opacity="0.98"/></radialGradient></defs><circle cx="31.20" cy="54.80" r="21.80" fill="url(#pb1)"/><ellipse cx="15.50" cy="61.99" rx="2.62" ry="1.09" fill="#4a4a88" fill-opacity="0.3"/><path d="M11.58 63.52 Q18.12 64.17 23.57 63.74" stroke="#d8e8f8" stroke-opacity="0.5" stroke-width="1.09" fill="none" stroke-linecap="round"/><path d="M23.57 63.74 Q30.11 63.52 36.65 62.65" stroke="#c8dcc0" stroke-opacity="0.35" stroke-width="0.76" fill="none" stroke-linecap="round"/><circle cx="31.20" cy="54.80" r="22.30" fill="url(#ps1)"/></svg>
<div class="r" style="left:1.4px;top:2.0px;width:5.6px;height:0.9px;background:#bbb;border-radius:0.4px"></div><div class="r" style="left:7.6px;top:2.1px;width:1.6px;height:0.7px;background:#888"></div><div class="r" style="left:10.0px;top:1.6px;width:1.6px;height:1.6px;border-radius:50%;background:#999"></div>
<div class="r" style="left:54.60px;top:1.6px;width:4.4px;height:1.5px;background:#d4d4d4;border-radius:0.5px"></div>
<div class="r" style="left:28.10px;top:1.8px;width:4.4px;height:0.8px;background:#6a6a6a;border-radius:0.5px"></div>
<svg class="r" style="left:16.00px;top:14.70px;overflow:visible" width="28" height="13" viewBox="0 0 28 13"><g fill="none" stroke="#e8e8e8" stroke-width="0.7" stroke-linecap="round"><ellipse cx="4.3" cy="4.0" rx="3.85" ry="3.75"/><path d="M8.15 4.0 C8.15 9.3 6.7 12.3 4.1 12.3 C2.5 12.3 1.5 11.6 1.0 10.5"/><path d="M19.7 12.4 V0.2 L13.2 8.8 H22.2"/><path d="M24.1 2.3 L27.0 0.2 V12.4"/></g><circle cx="11.0" cy="3.6" r="0.55" fill="#e8e8e8"/><circle cx="11.0" cy="9.4" r="0.55" fill="#e8e8e8"/></svg>
<div class="t" style="left:0;width:60.60px;text-align:center;top:30.36px;font-size:3.2px;color:#f0f0f0;font-weight:bold;-webkit-text-stroke:0;">Wednesday, October 14</div>
<div class="t" style="left:0;width:60.60px;text-align:center;top:90.69px;font-size:4.9px;color:#b4b4b4;-webkit-text-stroke:0;">&#8250; slide to unlock</div>
<div class="r" style="left:27.90px;top:104.70px;width:4.8px;height:0.8px;background:#6a6a6a;border-radius:0.5px"></div>
<div class="r" style="left:55.20px;top:103.30px;width:3.6px;height:2.6px;border:0.5px solid #6a6a6a;box-sizing:border-box;border-radius:0.4px"></div>
</div>
<div class="t" style="left:293.10px;top:206.59px;font-size:7.4px;color:#a0a0a0;font-weight:normal;-webkit-text-stroke:0;">iPhone 6</div>
<div class="r" style="left:290.90px;top:218.00px;width:70.90px;height:126.30px;background:#000;overflow:hidden;box-shadow:0 0.5px 1px rgba(0,0,0,0.25)">
<svg class="r" style="left:0;top:0" width="70.90" height="126.30"><defs><radialGradient id="pb2" gradientUnits="userSpaceOnUse" cx="24.20" cy="59.08" r="38.40"><stop offset="0" stop-color="#7a9ee2"/><stop offset="0.5" stop-color="#6888d4"/><stop offset="1" stop-color="#5070be"/></radialGradient><radialGradient id="ps2" gradientUnits="userSpaceOnUse" cx="0" cy="0" r="1.3" gradientTransform="translate(21.64 57.80) scale(30.72 37.12)"><stop offset="0.000" stop-color="#03050c" stop-opacity="0"/><stop offset="0.192" stop-color="#03050c" stop-opacity="0"/><stop offset="0.346" stop-color="#03050c" stop-opacity="0.15"/><stop offset="0.462" stop-color="#03050c" stop-opacity="0.3"/><stop offset="0.577" stop-color="#03050c" stop-opacity="0.5"/><stop offset="0.692" stop-color="#03050c" stop-opacity="0.72"/><stop offset="0.808" stop-color="#03050c" stop-opacity="0.9"/><stop offset="0.923" stop-color="#03050c" stop-opacity="0.97"/><stop offset="1.000" stop-color="#03050c" stop-opacity="0.98"/></radialGradient></defs><circle cx="37.00" cy="64.20" r="25.60" fill="url(#pb2)"/><ellipse cx="18.57" cy="72.65" rx="3.07" ry="1.28" fill="#4a4a88" fill-opacity="0.3"/><path d="M13.96 74.44 Q21.64 75.21 28.04 74.70" stroke="#d8e8f8" stroke-opacity="0.5" stroke-width="1.28" fill="none" stroke-linecap="round"/><path d="M28.04 74.70 Q35.72 74.44 43.40 73.42" stroke="#c8dcc0" stroke-opacity="0.35" stroke-width="0.90" fill="none" stroke-linecap="round"/><circle cx="37.00" cy="64.20" r="26.10" fill="url(#ps2)"/></svg>
<div class="r" style="left:1.4px;top:2.0px;width:5.6px;height:0.9px;background:#bbb;border-radius:0.4px"></div><div class="r" style="left:7.6px;top:2.1px;width:1.6px;height:0.7px;background:#888"></div><div class="r" style="left:10.0px;top:1.6px;width:1.6px;height:1.6px;border-radius:50%;background:#999"></div>
<div class="r" style="left:64.90px;top:1.6px;width:4.4px;height:1.5px;background:#d4d4d4;border-radius:0.5px"></div>
<div class="r" style="left:33.25px;top:1.8px;width:4.4px;height:0.8px;background:#6a6a6a;border-radius:0.5px"></div>
<svg class="r" style="left:21.15px;top:14.70px;overflow:visible" width="28" height="13" viewBox="0 0 28 13"><g fill="none" stroke="#e8e8e8" stroke-width="0.7" stroke-linecap="round"><ellipse cx="4.3" cy="4.0" rx="3.85" ry="3.75"/><path d="M8.15 4.0 C8.15 9.3 6.7 12.3 4.1 12.3 C2.5 12.3 1.5 11.6 1.0 10.5"/><path d="M19.7 12.4 V0.2 L13.2 8.8 H22.2"/><path d="M24.1 2.3 L27.0 0.2 V12.4"/></g><circle cx="11.0" cy="3.6" r="0.55" fill="#e8e8e8"/><circle cx="11.0" cy="9.4" r="0.55" fill="#e8e8e8"/></svg>
<div class="t" style="left:0;width:70.90px;text-align:center;top:30.36px;font-size:3.2px;color:#f0f0f0;font-weight:bold;-webkit-text-stroke:0;">Wednesday, October 14</div>
<div class="t" style="left:0;width:70.90px;text-align:center;top:108.99px;font-size:4.9px;color:#b4b4b4;-webkit-text-stroke:0;">&#8250; slide to unlock</div>
<div class="r" style="left:33.05px;top:123.70px;width:4.8px;height:0.8px;background:#6a6a6a;border-radius:0.5px"></div>
<div class="r" style="left:65.50px;top:122.30px;width:3.6px;height:2.6px;border:0.5px solid #6a6a6a;box-sizing:border-box;border-radius:0.4px"></div>
</div>
<div class="t" style="left:383.20px;top:206.79px;font-size:7.4px;color:#a0a0a0;font-weight:normal;-webkit-text-stroke:0;">iPhone 6 Plus</div>
<div class="r" style="left:381.00px;top:218.20px;width:78.20px;height:139.00px;background:#000;overflow:hidden;box-shadow:0 0.5px 1px rgba(0,0,0,0.25)">
<svg class="r" style="left:0;top:0" width="78.20" height="139.00"><defs><radialGradient id="pb3" gradientUnits="userSpaceOnUse" cx="25.90" cy="65.12" r="42.60"><stop offset="0" stop-color="#7a9ee2"/><stop offset="0.5" stop-color="#6888d4"/><stop offset="1" stop-color="#5070be"/></radialGradient><radialGradient id="ps3" gradientUnits="userSpaceOnUse" cx="0" cy="0" r="1.3" gradientTransform="translate(23.06 63.70) scale(34.08 41.18)"><stop offset="0.000" stop-color="#03050c" stop-opacity="0"/><stop offset="0.192" stop-color="#03050c" stop-opacity="0"/><stop offset="0.346" stop-color="#03050c" stop-opacity="0.15"/><stop offset="0.462" stop-color="#03050c" stop-opacity="0.3"/><stop offset="0.577" stop-color="#03050c" stop-opacity="0.5"/><stop offset="0.692" stop-color="#03050c" stop-opacity="0.72"/><stop offset="0.808" stop-color="#03050c" stop-opacity="0.9"/><stop offset="0.923" stop-color="#03050c" stop-opacity="0.97"/><stop offset="1.000" stop-color="#03050c" stop-opacity="0.98"/></radialGradient></defs><circle cx="40.10" cy="70.80" r="28.40" fill="url(#pb3)"/><ellipse cx="19.65" cy="80.17" rx="3.41" ry="1.42" fill="#4a4a88" fill-opacity="0.3"/><path d="M14.54 82.16 Q23.06 83.01 30.16 82.44" stroke="#d8e8f8" stroke-opacity="0.5" stroke-width="1.42" fill="none" stroke-linecap="round"/><path d="M30.16 82.44 Q38.68 82.16 47.20 81.02" stroke="#c8dcc0" stroke-opacity="0.35" stroke-width="0.99" fill="none" stroke-linecap="round"/><circle cx="40.10" cy="70.80" r="28.90" fill="url(#ps3)"/></svg>
<div class="r" style="left:1.4px;top:2.0px;width:5.6px;height:0.9px;background:#bbb;border-radius:0.4px"></div><div class="r" style="left:7.6px;top:2.1px;width:1.6px;height:0.7px;background:#888"></div><div class="r" style="left:10.0px;top:1.6px;width:1.6px;height:1.6px;border-radius:50%;background:#999"></div>
<div class="r" style="left:72.20px;top:1.6px;width:4.4px;height:1.5px;background:#d4d4d4;border-radius:0.5px"></div>
<div class="r" style="left:36.90px;top:1.8px;width:4.4px;height:0.8px;background:#6a6a6a;border-radius:0.5px"></div>
<svg class="r" style="left:24.80px;top:14.50px;overflow:visible" width="28" height="13" viewBox="0 0 28 13"><g fill="none" stroke="#e8e8e8" stroke-width="0.7" stroke-linecap="round"><ellipse cx="4.3" cy="4.0" rx="3.85" ry="3.75"/><path d="M8.15 4.0 C8.15 9.3 6.7 12.3 4.1 12.3 C2.5 12.3 1.5 11.6 1.0 10.5"/><path d="M19.7 12.4 V0.2 L13.2 8.8 H22.2"/><path d="M24.1 2.3 L27.0 0.2 V12.4"/></g><circle cx="11.0" cy="3.6" r="0.55" fill="#e8e8e8"/><circle cx="11.0" cy="9.4" r="0.55" fill="#e8e8e8"/></svg>
<div class="t" style="left:0;width:78.20px;text-align:center;top:30.16px;font-size:3.2px;color:#f0f0f0;font-weight:bold;-webkit-text-stroke:0;">Wednesday, October 14</div>
<div class="t" style="left:0;width:78.20px;text-align:center;top:121.79px;font-size:4.9px;color:#b4b4b4;-webkit-text-stroke:0;">&#8250; slide to unlock</div>
<div class="r" style="left:36.70px;top:136.40px;width:4.8px;height:0.8px;background:#6a6a6a;border-radius:0.5px"></div>
<div class="r" style="left:72.80px;top:135.00px;width:3.6px;height:2.6px;border:0.5px solid #6a6a6a;box-sizing:border-box;border-radius:0.4px"></div>
</div>
<div class="t" style="left:479.60px;top:206.39px;font-size:7.4px;color:#a0a0a0;font-weight:normal;-webkit-text-stroke:0;">iPad</div>
<div class="r" style="left:477.40px;top:217.80px;width:145.20px;height:194.30px;background:#000;overflow:hidden;box-shadow:0 0.5px 1px rgba(0,0,0,0.25)">
<svg class="r" style="left:0;top:0" width="145.20" height="194.30"><defs><radialGradient id="pb4" gradientUnits="userSpaceOnUse" cx="49.35" cy="88.50" r="78.75"><stop offset="0" stop-color="#7a9ee2"/><stop offset="0.5" stop-color="#6888d4"/><stop offset="1" stop-color="#5070be"/></radialGradient><radialGradient id="ps4" gradientUnits="userSpaceOnUse" cx="0" cy="0" r="1.3" gradientTransform="translate(44.10 85.88) scale(63.00 76.12)"><stop offset="0.000" stop-color="#03050c" stop-opacity="0"/><stop offset="0.192" stop-color="#03050c" stop-opacity="0"/><stop offset="0.346" stop-color="#03050c" stop-opacity="0.15"/><stop offset="0.462" stop-color="#03050c" stop-opacity="0.3"/><stop offset="0.577" stop-color="#03050c" stop-opacity="0.5"/><stop offset="0.692" stop-color="#03050c" stop-opacity="0.72"/><stop offset="0.808" stop-color="#03050c" stop-opacity="0.9"/><stop offset="0.923" stop-color="#03050c" stop-opacity="0.97"/><stop offset="1.000" stop-color="#03050c" stop-opacity="0.98"/></radialGradient></defs><circle cx="75.60" cy="99.00" r="52.50" fill="url(#pb4)"/><ellipse cx="37.80" cy="116.33" rx="6.30" ry="2.62" fill="#4a4a88" fill-opacity="0.3"/><path d="M28.35 120.00 Q44.10 121.58 57.23 120.53" stroke="#d8e8f8" stroke-opacity="0.5" stroke-width="2.62" fill="none" stroke-linecap="round"/><path d="M57.23 120.53 Q72.98 120.00 88.73 117.90" stroke="#c8dcc0" stroke-opacity="0.35" stroke-width="1.84" fill="none" stroke-linecap="round"/><circle cx="75.60" cy="99.00" r="53.00" fill="url(#ps4)"/></svg>
<div class="r" style="left:1.4px;top:2.0px;width:5.6px;height:0.9px;background:#bbb;border-radius:0.4px"></div><div class="r" style="left:7.6px;top:2.1px;width:1.6px;height:0.7px;background:#888"></div><div class="r" style="left:10.0px;top:1.6px;width:1.6px;height:1.6px;border-radius:50%;background:#999"></div>
<div class="r" style="left:139.20px;top:1.6px;width:4.4px;height:1.5px;background:#d4d4d4;border-radius:0.5px"></div>
<div class="r" style="left:70.40px;top:1.8px;width:4.4px;height:0.8px;background:#6a6a6a;border-radius:0.5px"></div>
<svg class="r" style="left:58.30px;top:14.90px;overflow:visible" width="28" height="13" viewBox="0 0 28 13"><g fill="none" stroke="#e8e8e8" stroke-width="0.7" stroke-linecap="round"><ellipse cx="4.3" cy="4.0" rx="3.85" ry="3.75"/><path d="M8.15 4.0 C8.15 9.3 6.7 12.3 4.1 12.3 C2.5 12.3 1.5 11.6 1.0 10.5"/><path d="M19.7 12.4 V0.2 L13.2 8.8 H22.2"/><path d="M24.1 2.3 L27.0 0.2 V12.4"/></g><circle cx="11.0" cy="3.6" r="0.55" fill="#e8e8e8"/><circle cx="11.0" cy="9.4" r="0.55" fill="#e8e8e8"/></svg>
<div class="t" style="left:0;width:145.20px;text-align:center;top:30.56px;font-size:3.2px;color:#f0f0f0;font-weight:bold;-webkit-text-stroke:0;">Wednesday, October 14</div>
<div class="t" style="left:0;width:145.20px;text-align:center;top:177.19px;font-size:4.9px;color:#b4b4b4;-webkit-text-stroke:0;">&#8250; slide to unlock</div>
<div class="r" style="left:70.20px;top:191.70px;width:4.8px;height:0.8px;background:#6a6a6a;border-radius:0.5px"></div>
<div class="r" style="left:139.80px;top:190.30px;width:3.6px;height:2.6px;border:0.5px solid #6a6a6a;box-sizing:border-box;border-radius:0.4px"></div>
</div>
<div class="r" style="left:627.20px;top:125.50px;width:137.30px;height:361.30px;background:#e0e0e0;border-left:1px solid #cacaca;box-shadow:inset 1px 0 0 #ebebeb;box-sizing:border-box;"></div>
<div class="r" style="left:627.20px;top:125.50px;width:137.30px;height:17.10px;background:#f0f0f0;border-bottom:0.6px solid #cdcdcd;border-left:0.6px solid #c2c2c2;box-sizing:border-box;"></div>
<svg class="r" style="left:0;top:0" width="800" height="600"><rect x="636.0" y="130.5" width="1.6" height="7.5" fill="#5ca2ee"/><rect x="633.6" y="129.8" width="0.5" height="9" fill="#c8c8c8"/><rect x="639.2" y="129.8" width="0.5" height="9" fill="#c8c8c8"/><rect x="650" y="133.8" width="7.5" height="1.6" fill="#5ca2ee"/><rect x="649.4" y="131.2" width="9" height="0.5" fill="#c8c8c8"/><rect x="649.4" y="137.4" width="9" height="0.5" fill="#c8c8c8"/><rect x="664.3" y="128.5" width="0.6" height="12" fill="#d0d0d0"/><rect x="672.3" y="129.8" width="0.5" height="9" fill="#c8c8c8"/><rect x="673.3" y="131.2" width="5" height="1.6" fill="#5ca2ee"/><rect x="673.3" y="135.6" width="3.5" height="1.6" fill="#5ca2ee"/><rect x="690" y="129.8" width="0.5" height="9" fill="#c8c8c8"/><rect x="687.5" y="131.2" width="5.5" height="1.6" fill="#5ca2ee"/><rect x="688.5" y="135.6" width="3.5" height="1.6" fill="#5ca2ee"/><rect x="708.5" y="129.8" width="0.5" height="9" fill="#c8c8c8"/><rect x="703.3" y="131.2" width="5" height="1.6" fill="#5ca2ee"/><rect x="704.8" y="135.6" width="3.5" height="1.6" fill="#5ca2ee"/><rect x="717.5" y="129.6" width="9" height="0.5" fill="#c8c8c8"/><rect x="719.2" y="130.6" width="1.6" height="6" fill="#5ca2ee"/><rect x="723.2" y="130.6" width="1.6" height="3.5" fill="#5ca2ee"/><rect x="733.4" y="134.0" width="9" height="0.5" fill="#c8c8c8"/><rect x="735.4" y="130.8" width="1.6" height="7" fill="#5ca2ee"/><rect x="739.4" y="132.2" width="1.6" height="4" fill="#5ca2ee"/><rect x="750" y="138.6" width="9" height="0.5" fill="#c8c8c8"/><rect x="751.8" y="131.6" width="1.6" height="6.6" fill="#5ca2ee"/><rect x="755.8" y="134.2" width="1.6" height="4" fill="#5ca2ee"/></svg>
<div class="t" style="left:633.10px;top:150.30px;font-size:7.5px;color:#303030;font-weight:normal;">Position</div>
<div class="r" style="left:673.40px;top:148.00px;width:37.10px;height:11.90px;background:#fff;border:0.5px solid #c9c9c9;border-radius:1.5px;box-sizing:border-box;box-shadow:0 0.4px 0.4px rgba(0,0,0,0.08);"></div>
<div class="r" style="left:720.70px;top:148.00px;width:37.50px;height:11.90px;background:#fff;border:0.5px solid #c9c9c9;border-radius:1.5px;box-sizing:border-box;box-shadow:0 0.4px 0.4px rgba(0,0,0,0.08);"></div>
<div class="t" style="left:541.60px;width:300px;text-align:center;top:161.41px;font-size:6.4px;color:#303030;font-weight:normal;">X</div>
<div class="t" style="left:589.80px;width:300px;text-align:center;top:161.41px;font-size:6.4px;color:#303030;font-weight:normal;">Y</div>
<div class="t" style="left:633.10px;top:172.70px;font-size:7.5px;color:#303030;font-weight:normal;">Size</div>
<div class="r" style="left:673.40px;top:170.30px;width:37.10px;height:11.90px;background:#fff;border:0.5px solid #c9c9c9;border-radius:1.5px;box-sizing:border-box;box-shadow:0 0.4px 0.4px rgba(0,0,0,0.08);"></div>
<div class="r" style="left:720.70px;top:170.30px;width:37.50px;height:11.90px;background:#fff;border:0.5px solid #c9c9c9;border-radius:1.5px;box-sizing:border-box;box-shadow:0 0.4px 0.4px rgba(0,0,0,0.08);"></div>
<svg class="r" style="left:713.50px;top:174.00px" width="5" height="5" viewBox="0 0 5 5"><path d="M0.8 0.5 V3.8 H4.3" fill="none" stroke="#777" stroke-width="0.8"/><path d="M2 3 L3.8 1" stroke="#777" stroke-width="0.7"/></svg>
<div class="t" style="left:541.60px;width:300px;text-align:center;top:183.31px;font-size:6.4px;color:#303030;font-weight:normal;">Width</div>
<div class="t" style="left:589.80px;width:300px;text-align:center;top:183.31px;font-size:6.4px;color:#303030;font-weight:normal;">Height</div>
<div class="t" style="left:633.10px;top:195.10px;font-size:7.5px;color:#303030;font-weight:normal;">Transform</div>
<div class="r" style="left:673.40px;top:193.00px;width:37.10px;height:11.70px;background:#fff;border:0.5px solid #c9c9c9;border-radius:1.5px;box-sizing:border-box;box-shadow:0 0.4px 0.4px rgba(0,0,0,0.08);"></div>
<div class="r" style="left:721.30px;top:193.10px;width:36.50px;height:11.50px;background:#f1f1f1;border:0.5px solid #cdcdcd;border-radius:2px;box-sizing:border-box;box-shadow:0 0.5px 0.5px rgba(0,0,0,0.08);"></div>
<div class="r" style="left:739.40px;top:194.00px;width:0.50px;height:9.90px;background:#dadada;"></div>
<svg class="r" style="left:718.00px;top:190.00px" width="44" height="20" viewBox="0 0 44 20"><path d="M12.4 5.0 V11.8 H8.5 Z" fill="#cacaca"/><path d="M12.9 5.0 V11.8 H16.5 Z" fill="#5ea2ec"/><path d="M27.9 5.2 L35.2 8.4 H27.9 Z" fill="#cacaca"/><path d="M27.9 9.4 H35.2 L27.9 12.6 Z" fill="#5ea2ec"/></svg>
<div class="t" style="left:541.60px;width:300px;text-align:center;top:205.11px;font-size:6.4px;color:#303030;font-weight:normal;">Rotate</div>
<div class="t" style="left:589.20px;width:300px;text-align:center;top:205.81px;font-size:6.4px;color:#303030;font-weight:normal;">Flip</div>
<div class="r" style="left:627.80px;top:215.50px;width:136.70px;height:0.60px;background:#cccccc;"></div>
<div class="t" style="left:633.10px;top:223.70px;font-size:7.5px;color:#303030;font-weight:normal;">Opacity</div>
<div class="r" style="left:676.70px;top:226.60px;width:48.00px;height:1.40px;background:#bdbdbd;border-radius:0.7px;"></div>
<div class="r" style="left:673.40px;top:223.80px;width:7.00px;height:7.00px;background:#fdfdfd;border-radius:50%;box-shadow:0 0 0 0.5px #bdbdbd,0 0.5px 0.8px rgba(0,0,0,0.2);"></div>
<div class="r" style="left:731.50px;top:221.80px;width:26.40px;height:11.80px;background:#fff;border:0.5px solid #c9c9c9;border-radius:1.5px;box-sizing:border-box;box-shadow:0 0.4px 0.4px rgba(0,0,0,0.08);"></div>
<div class="t" style="left:633.10px;top:241.20px;font-size:7.5px;color:#303030;font-weight:normal;">Blending</div>
<div class="r" style="left:673.70px;top:239.30px;width:84.20px;height:12.30px;background:#eeeeee;border:0.5px solid #d0d0d0;border-radius:2.5px;box-sizing:border-box;"></div>
<div class="t" style="left:678.80px;top:241.29px;font-size:7.4px;color:#7c7c7c;font-weight:normal;">Normal</div>
<svg class="r" style="left:750.50px;top:240.40px" width="6" height="10" viewBox="0 0 6 10"><path d="M0.9 3.7 L3 1.5 L5.1 3.7 M0.9 6.5 L3 8.7 L5.1 6.5" fill="none" stroke="#444" stroke-width="0.9"/></svg>
<div class="r" style="left:627.80px;top:257.20px;width:136.70px;height:0.60px;background:#cccccc;"></div>
<div class="t" style="left:632.80px;top:261.94px;font-size:7.35px;color:#383838;font-weight:bold;">Fills</div>
<div class="r" style="left:627.80px;top:274.20px;width:136.70px;height:0.60px;background:#cccccc;"></div>
<div class="t" style="left:632.80px;top:278.74px;font-size:7.35px;color:#383838;font-weight:bold;">Borders</div>
<div class="r" style="left:627.80px;top:290.50px;width:136.70px;height:0.60px;background:#cccccc;"></div>
<div class="t" style="left:632.80px;top:295.34px;font-size:7.35px;color:#383838;font-weight:bold;">Shadows</div>
<div class="r" style="left:627.80px;top:307.30px;width:136.70px;height:0.60px;background:#cccccc;"></div>
<div class="t" style="left:632.80px;top:312.14px;font-size:7.35px;color:#383838;font-weight:bold;">Inner Shadows</div>
<div class="r" style="left:627.80px;top:324.30px;width:136.70px;height:0.60px;background:#cccccc;"></div>
<div class="t" style="left:632.80px;top:328.44px;font-size:7.35px;color:#383838;font-weight:bold;">Gaussian Blur</div>
<div class="r" style="left:627.80px;top:340.20px;width:136.70px;height:0.60px;background:#cccccc;"></div>
<svg class="r" style="left:685.50px;top:328.30px" width="5" height="9" viewBox="0 0 5 9"><path d="M0.8 3 L2.5 1.2 L4.2 3 M0.8 5.6 L2.5 7.4 L4.2 5.6" fill="none" stroke="#777" stroke-width="0.7"/></svg>
<div class="r" style="left:750.60px;top:328.60px;width:7.40px;height:7.40px;background:#f3f3f3;border:0.5px solid #c4c4c4;border-radius:1.5px;box-sizing:border-box;"></div>
<svg class="r" style="left:0;top:0" width="800" height="130"><rect x="42.2" y="98.8" width="11.8" height="12" rx="2" fill="#3c3c3c" stroke="#fafafa" stroke-opacity="0.5" stroke-width="0.4"/><path d="M48.1 102.2 V107.4 M45.5 104.8 H50.7" stroke="#fff" stroke-width="1.6"/><path d="M56.6 107.7 H60.2 L58.4 109.8 Z" fill="#222"/><rect x="76.8" y="99.2" width="11.6" height="11.4" fill="none" stroke="#b4b4b4" stroke-width="0.6"/><rect x="76.0" y="98.4" width="1.6" height="1.6" fill="#c8c8c8"/><rect x="87.60000000000001" y="98.4" width="1.6" height="1.6" fill="#c8c8c8"/><rect x="76.0" y="109.8" width="1.6" height="1.6" fill="#c8c8c8"/><rect x="87.60000000000001" y="109.8" width="1.6" height="1.6" fill="#c8c8c8"/><rect x="80.6" y="103.0" width="5.8" height="5.2" fill="#f6f6f6" stroke="#9a9a9a" stroke-width="0.5"/><rect x="78.5" y="101.8" width="5.6" height="4.8" fill="#9ccbf5" stroke="#6fa8e0" stroke-width="0.4"/><rect x="108.6" y="103.2" width="7.8" height="7.4" fill="#f4f4f4" stroke="#a6a6a6" stroke-width="0.7"/><rect x="104.3" y="99.4" width="7.6" height="7.6" fill="#9ccbf5" stroke="#b6b6b6" stroke-width="0.6"/><rect x="103.6" y="98.7" width="1.4" height="1.4" fill="#bdbdbd"/><rect x="111.2" y="98.7" width="1.4" height="1.4" fill="#bdbdbd"/><rect x="103.6" y="106.3" width="1.4" height="1.4" fill="#bdbdbd"/><rect x="111.2" y="106.3" width="1.4" height="1.4" fill="#bdbdbd"/><circle cx="160.1" cy="104.9" r="5.5" fill="#e2e0e4" fill-opacity="0.5" stroke="#cfb2e2" stroke-width="0.8"/><path d="M159.4 102.3 A2.7 2.7 0 0 0 159.4 107.5 M160.8 102.3 A2.7 2.7 0 0 1 160.8 107.5" fill="none" stroke="#d68ee8" stroke-width="1.1"/><path d="M200.0 104.9 H205.1" stroke="#6e6e6e" stroke-width="1.4"/><circle cx="214.6" cy="104.1" r="3.8" fill="#d6eef8" stroke="#1e1e1e" stroke-width="1.3"/><path d="M217.4 106.9 L221.0 110.6" stroke="#1e1e1e" stroke-width="1.5" stroke-linecap="round"/><path d="M227.9 104.9 H232.9 M230.4 102.4 V107.4" stroke="#8a8a8a" stroke-width="1.1"/><circle cx="257.9" cy="104.95" r="5.6" fill="#ececec" stroke="#b8b8b8" stroke-width="0.6"/><path d="M253.9 108.9 A5.6 5.6 0 0 0 261.9 101.0 Z" fill="#9ddd98"/><circle cx="257.9" cy="104.95" r="5.6" fill="none" stroke="#a8d4a4" stroke-width="0.6"/><path d="M253.6 109.2 L262.2 100.6" stroke="#9a9a9a" stroke-width="0.6"/><rect x="281" y="99.3" width="11.4" height="11.2" fill="#cdeec9" stroke="#b4b4b4" stroke-width="0.5"/><path d="M283.8 101.8 H289.6 L292.3 110.4 H281.1 Z" fill="#9ddd98" stroke="#8cc888" stroke-width="0.4"/><circle cx="281" cy="99.3" r="0.7" fill="#a6a6a6"/><circle cx="292.4" cy="99.3" r="0.7" fill="#a6a6a6"/><circle cx="281" cy="110.5" r="0.7" fill="#a6a6a6"/><circle cx="292.4" cy="110.5" r="0.7" fill="#a6a6a6"/><circle cx="283.8" cy="101.8" r="0.7" fill="#a6a6a6"/><circle cx="289.6" cy="101.8" r="0.7" fill="#a6a6a6"/><path d="M315.9 99.7 A5.4 5.6 0 0 0 313.4 109.0" fill="none" stroke="#8fcf8a" stroke-width="2.0"/><path d="M315.9 99.7 A5.4 5.6 0 0 0 313.4 109.0" fill="none" stroke="#a2e09d" stroke-width="1.2"/><path d="M311.9 110.8 L316.6 110.8 L316.6 105.9 Z" fill="#a2e09d" stroke="#8fcf8a" stroke-width="0.4"/><path d="M320.5 110.4 A5.4 5.6 0 0 0 323.0 101.1" fill="none" stroke="#8fcf8a" stroke-width="2.0"/><path d="M320.5 110.4 A5.4 5.6 0 0 0 323.0 101.1" fill="none" stroke="#a2e09d" stroke-width="1.2"/><path d="M319.0 99.2 L324.0 99.2 L319.0 104.1 Z" fill="#a2e09d" stroke="#8fcf8a" stroke-width="0.4"/><g transform="rotate(-45 344.0 104.9)"><clipPath id="flc"><rect x="338.0" y="101.1" width="12.0" height="7.6" rx="3.8"/></clipPath><g clip-path="url(#flc)"><rect x="337" y="100" width="14" height="10" fill="#9ddd98"/><path d="M337 100 H351 V104.9 Q347.5 104.2 344 104.9 Q340.5 105.6 337 104.9 Z" fill="#92d6e0"/></g><rect x="338.0" y="101.1" width="12.0" height="7.6" rx="3.8" fill="none" stroke="#a6a6a6" stroke-width="0.5"/></g><path d="M368.8 99.0 Q371.5 103.5 376.0 107.0 M378.4 99.0 Q375.7 103.5 371.2 107.0" fill="none" stroke="#a8a8a8" stroke-width="0.9"/><circle cx="370.9" cy="108.2" r="2.5" fill="#8fd28a" stroke="#7cc077" stroke-width="0.4"/><circle cx="376.5" cy="108.2" r="2.5" fill="#8fd28a" stroke="#7cc077" stroke-width="0.4"/><circle cx="370.9" cy="108.2" r="0.8" fill="#d8ead6"/><circle cx="376.5" cy="108.2" r="0.8" fill="#d8ead6"/><circle cx="408.4" cy="104.9" r="5.5" fill="#cdeec9" stroke="#9ddd98" stroke-width="1"/><rect x="403.7" y="102.0" width="6.6" height="5.8" fill="#9ccbf5" stroke="#7eb4e4" stroke-width="0.4"/><circle cx="431.0" cy="104.0" r="5.2" fill="#d3efcf" stroke="#c2e6be" stroke-width="0.5"/><circle cx="429.5" cy="106.1" r="3.6" fill="#b6e6b1" stroke="#a2dc9c" stroke-width="0.5"/><circle cx="428.2" cy="108.0" r="2.2" fill="#97db92" stroke="#86cc80" stroke-width="0.5"/><rect x="455.3" y="103.6" width="7.4" height="7.2" fill="#86d0d0" stroke="#6ab8ba" stroke-width="0.5"/><rect x="459.2" y="99.6" width="7.4" height="7.2" fill="#86d0d0" stroke="#6ab8ba" stroke-width="0.5"/><path d="M459.2 103.6 V106.8 H462.7" fill="none" stroke="#6ab8ba" stroke-width="0.4"/><rect x="482.6" y="103.4" width="7.4" height="7.2" fill="#86d0d0" stroke="#6ab8ba" stroke-width="0.5"/><rect x="486.6" y="99.3" width="7.4" height="7.2" fill="#ededed" stroke="#b5b5b5" stroke-width="0.5"/><rect x="515.5" y="103.5" width="7.4" height="7.2" fill="#ededed" stroke="#b5b5b5" stroke-width="0.5"/><rect x="519.4" y="99.4" width="7.4" height="7.2" fill="#ededed" stroke="#b5b5b5" stroke-width="0.5"/><rect x="519.4" y="103.5" width="3.5" height="3.1" fill="#86d0d0" stroke="#6ab8ba" stroke-width="0.4"/><rect x="550.4" y="103.5" width="7.4" height="7.2" fill="#86d0d0" stroke="#6ab8ba" stroke-width="0.5"/><rect x="554.3" y="99.4" width="7.4" height="7.2" fill="#86d0d0" stroke="#6ab8ba" stroke-width="0.5"/><rect x="554.3" y="103.5" width="3.5" height="3.1" fill="#f4f4f4" stroke="#6ab8ba" stroke-width="0.3"/><path d="M597.8 99.0 L601.0 102.4 H599.0 V105.0 H596.6 V102.4 H594.6 Z" fill="#8cc2ee"/><rect x="592.6" y="104.6" width="10.8" height="2.2" fill="#fafafa" stroke="#8cc2ee" stroke-width="0.6"/><rect x="592.4" y="108.6" width="11.2" height="1.8" fill="#8cc2ee"/><rect x="625.4" y="100.0" width="11.2" height="1.8" fill="#8cc2ee"/><rect x="625.6" y="104.0" width="10.8" height="2.2" fill="#fafafa" stroke="#8cc2ee" stroke-width="0.6"/><path d="M631.0 111.0 L627.8 107.6 H629.8 V106.4 H632.2 V107.6 H634.2 Z" fill="#8cc2ee"/><rect x="664.0" y="99.3" width="9.6" height="11.2" rx="1.2" fill="#2e2e2e"/><rect x="661.9" y="103.0" width="5.6" height="7.5" rx="1" fill="#4a4a4a" stroke="#eaeaea" stroke-width="0.5"/><defs><clipPath id="cw"><circle cx="701.2" cy="104.6" r="5.5"/></clipPath><radialGradient id="cwg"><stop offset="0" stop-color="#fff" stop-opacity="0.85"/><stop offset="1" stop-color="#fff" stop-opacity="0"/></radialGradient></defs><g clip-path="url(#cw)"><path d="M701.2 104.6 L699.04 97.94 L703.50 97.99 Z" fill="#f7e05a"/><path d="M701.2 104.6 L703.36 97.94 L706.94 100.60 Z" fill="#f9a24a"/><path d="M701.2 104.6 L706.86 100.49 L708.20 104.74 Z" fill="#f76a8a"/><path d="M701.2 104.6 L708.20 104.60 L706.78 108.83 Z" fill="#e25be0"/><path d="M701.2 104.6 L706.86 108.71 L703.23 111.30 Z" fill="#9a66f0"/><path d="M701.2 104.6 L703.36 111.26 L698.90 111.21 Z" fill="#4a86f2"/><path d="M701.2 104.6 L699.04 111.26 L695.46 108.60 Z" fill="#3cc8ee"/><path d="M701.2 104.6 L695.54 108.71 L694.20 104.46 Z" fill="#5ee0a0"/><path d="M701.2 104.6 L694.20 104.60 L695.62 100.37 Z" fill="#8ee25a"/><path d="M701.2 104.6 L695.54 100.49 L699.17 97.90 Z" fill="#c8e452"/><circle cx="701.2" cy="104.6" r="5.5" fill="url(#cwg)"/></g><circle cx="701.2" cy="104.6" r="5.5" fill="none" stroke="#666" stroke-width="0.6"/><rect x="726.4" y="99.5" width="11.4" height="11.0" rx="1.4" fill="#fbfbfb" stroke="#9a9a9a" stroke-width="0.6"/><path d="M730.2 99.8 V110.2 M734.0 99.8 V110.2 M726.7 103.2 H737.5 M726.7 106.8 H737.5" stroke="#dcdcdc" stroke-width="0.5"/><path d="M753.2 102.9 L756.0 105.4 L753.2 107.9 M757.0 102.9 L759.8 105.4 L757.0 107.9" fill="none" stroke="#3a3a3a" stroke-width="1.0"/></svg>
<div class="r" style="left:35.00px;top:80.50px;width:730.00px;height:406.80px;border-radius:5.5px 5.5px 0 0;border:0.6px solid rgba(0,0,0,0.26);border-bottom-color:rgba(0,0,0,0.12);box-sizing:border-box;"></div>
<div class="r" style="left:35.80px;top:485.80px;width:728.40px;height:0.80px;background:rgba(255,255,255,0.7);"></div>
</body></html>
